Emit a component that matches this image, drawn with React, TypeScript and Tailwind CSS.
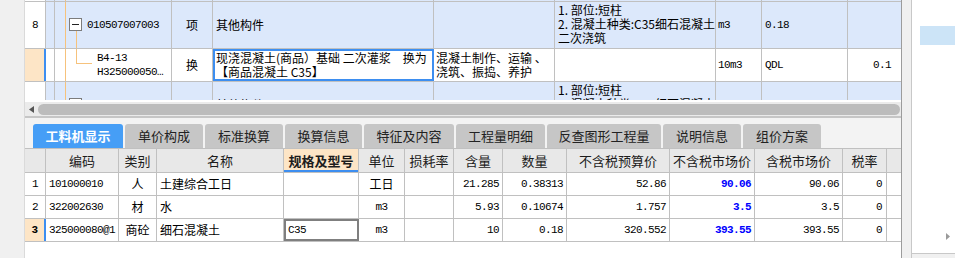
import React from 'react'

const mono = "font-['Liberation_Mono',monospace] text-[11px] tracking-[-0.6px]"

function C({
  w,
  className = '',
  nb,
  children,
}: {
  w: string
  className?: string
  nb?: boolean
  children?: React.ReactNode
}) {
  return (
    <div
      className={`${w} shrink-0 flex items-center overflow-hidden whitespace-nowrap ${
        nb ? '' : 'border-r border-[#c0c0c0]'
      } ${className}`}
    >
      {children}
    </div>
  )
}

function TreeLine() {
  return <div className="absolute left-[10px] top-0 bottom-0 w-px bg-[#f6c27c]" />
}

function FoldBox() {
  return (
    <>
      <div className="absolute left-[21px] top-[28px] bottom-0 w-px bg-[#f6c27c]" />
      <div className="absolute left-[14px] top-[16px] w-[13px] h-[13px] border border-[#7c7c7c] bg-white flex items-center justify-center">
        <div className="w-[7px] h-px bg-[#222]" />
      </div>
    </>
  )
}

function ItemRow({ num, code }: { num: string; code: string }) {
  return (
    <div className="flex h-[47px] border-b border-[#c0c0c0] bg-[#dce8fb]">
      <C w="w-[21px]" className={`bg-white justify-center ${mono}`}>{num}</C>
      <C w="w-[9px]" />
      <C w="w-[117px]" className={`relative pl-[32px] ${mono}`}>
        <TreeLine />
        <FoldBox />
        <span>{code}</span>
      </C>
      <C w="w-[41px]" className="justify-center">项</C>
      <C w="w-[221px]" className="pl-[3px]">其他构件</C>
      <C w="w-[121px]" />
      <C w="w-[161px]" className="pl-[3px] items-start pt-px">
        <div className="leading-[14px]">
          <div>1. 部位:短柱</div>
          <div>2. 混凝土种类:C35细石混凝土</div>
          <div>二次浇筑</div>
        </div>
      </C>
      <C w="w-[46px]" className={`pl-[2px] ${mono}`}>m3</C>
      <C w="w-[86px]" className={`pl-[3px] ${mono}`}>0.18</C>
      <C w="w-[53px]" nb />
    </div>
  )
}

function TopGrid() {
  return (
    <div className="h-[100px] overflow-hidden bg-white">
      <div className="flex h-[2px] border-b border-[#c0c0c0] bg-[#dce8fb]">
        <C w="w-[21px]" className="bg-white" />
        <C w="w-[9px]" />
        <C w="w-[117px]" className="relative">
          <TreeLine />
        </C>
        <C w="w-[41px]" />
        <C w="w-[221px]" />
        <C w="w-[121px]" />
        <C w="w-[161px]" />
        <C w="w-[46px]" />
        <C w="w-[86px]" />
        <C w="w-[53px]" nb />
      </div>
      <ItemRow num="8" code="010507007003" />
      <div className="flex h-[33px] border-b border-[#c0c0c0] bg-white">
        <C w="w-[21px]" nb className="bg-[#fde5c6] border-r-2 border-[#3d8ef0]" />
        <C w="w-[9px]" />
        <C w="w-[117px]" className={`relative pl-[42px] ${mono}`}>
          <TreeLine />
          <div className="absolute left-[21px] top-0 h-[14px] w-px bg-[#f6c27c]" />
          <div className="absolute left-[21px] top-[14px] w-[16px] h-px bg-[#f6c27c]" />
          <div className="leading-[14px]">
            <div>B4-13</div>
            <div>H325000050…</div>
          </div>
        </C>
        <C w="w-[41px]" className="justify-center">换</C>
        <C w="w-[221px]" nb className="border-2 border-[#3d8ef0] pl-px">
          <div className="leading-[14px]">
            <div>现浇混凝土(商品）基础 二次灌浆　换为</div>
            <div>【商品混凝土 C35】</div>
          </div>
        </C>
        <C w="w-[121px]" className="pl-[2px]">
          <div className="leading-[14px]">
            <div>混凝土制作、运输 、</div>
            <div>浇筑、振捣、养护</div>
          </div>
        </C>
        <C w="w-[161px]" />
        <C w="w-[46px]" className={`pl-[2px] ${mono}`}>10m3</C>
        <C w="w-[86px]" className={`pl-[3px] ${mono}`}>QDL</C>
        <C w="w-[53px]" nb className={`justify-end pr-[10px] ${mono}`}>0.1</C>
      </div>
      <ItemRow num="9" code="010507007004" />
    </div>
  )
}

function HScroll() {
  return (
    <div className="h-[14px] bg-[#ebebeb] flex items-center">
      <div className="w-[13px] shrink-0 flex items-center justify-center">
        <svg width="5" height="7" viewBox="0 0 5 7">
          <polygon points="5,0 0,3.5 5,7" fill="#555" />
        </svg>
      </div>
      <div className="flex-1 h-[11px] rounded-full bg-[#bcbcbc] mr-px" />
    </div>
  )
}

const tabs = [
  { label: '单价构成', w: 'w-[78px]' },
  { label: '标准换算', w: 'w-[78px]' },
  { label: '换算信息', w: 'w-[77px]' },
  { label: '特征及内容', w: 'w-[90px]' },
  { label: '工程量明细', w: 'w-[89px]' },
  { label: '反查图形工程量', w: 'w-[114px]' },
  { label: '说明信息', w: 'w-[78px]' },
  { label: '组价方案', w: 'w-[78px]' },
]

function Tabs() {
  return (
    <div className="h-[30px] bg-[#f3f3f3] flex items-end pl-[8px] gap-[2px] text-[13px]">
      <div className="w-[90px] h-[24px] rounded-t-[3px] bg-[#469ef6] text-white font-bold flex items-center justify-center">
        工料机显示
      </div>
      {tabs.map((t) => (
        <div
          key={t.label}
          className={`${t.w} h-[24px] rounded-t-[3px] bg-[#c6c6c6] text-[#222] flex items-center justify-center`}
        >
          {t.label}
        </div>
      ))}
    </div>
  )
}

interface ResRow {
  n: string
  code: string
  type: string
  name: string
  spec: string
  unit: string
  qty: string
  amt: string
  budget: string
  market: string
  taxm: string
  sel?: boolean
}

const rows: ResRow[] = [
  { n: '1', code: '101000010', type: '人', name: '土建综合工日', spec: '', unit: '工日', qty: '21.285', amt: '0.38313', budget: '52.86', market: '90.06', taxm: '90.06' },
  { n: '2', code: '322002630', type: '材', name: '水', spec: '', unit: 'm3', qty: '5.93', amt: '0.10674', budget: '1.757', market: '3.5', taxm: '3.5' },
  { n: '3', code: '325000080@1', type: '商砼', name: '细石混凝土', spec: 'C35', unit: 'm3', qty: '10', amt: '0.18', budget: '320.552', market: '393.55', taxm: '393.55', sel: true },
]

function BottomGrid() {
  return (
    <div className="bg-white">
      <div className="flex h-[25px] border-y border-[#c0c0c0] bg-[#e8e8e8] text-[13px] text-[#1c1c1c]">
        <C w="w-[21px]" />
        <C w="w-[73px]" className="justify-center">编码</C>
        <C w="w-[38px]" className="justify-center">类别</C>
        <C w="w-[127px]" className="justify-center">名称</C>
        <C w="w-[75px]" className="justify-center font-bold bg-[#fde5c6] shadow-[inset_0_-2px_0_#3d8ef0]">规格及型号</C>
        <C w="w-[46px]" className="justify-center">单位</C>
        <C w="w-[49px]" className="justify-center">损耗率</C>
        <C w="w-[49px]" className="justify-center">含量</C>
        <C w="w-[64px]" className="justify-center">数量</C>
        <C w="w-[103px]" className="justify-center">不含税预算价</C>
        <C w="w-[85px]" className="justify-center">不含税市场价</C>
        <C w="w-[88px]" className="justify-center">含税市场价</C>
        <C w="w-[44px]" className="justify-center">税率</C>
        <C w="w-[14px]" nb />
      </div>
      {rows.map((r) => (
        <div key={r.n} className="flex h-[23px] border-b border-[#c0c0c0]">
          {r.sel ? (
            <C w="w-[21px]" nb className={`justify-center bg-[#fde5c6] border-r-2 border-[#3d8ef0] font-bold ${mono}`}>
              {r.n}
            </C>
          ) : (
            <C w="w-[21px]" className={`justify-center ${mono}`}>{r.n}</C>
          )}
          <C w="w-[73px]" className={`pl-[3px] ${mono}`}>{r.code}</C>
          <C w="w-[38px]" className="justify-center">{r.type}</C>
          <C w="w-[127px]" className="pl-[3px]">{r.name}</C>
          {r.sel ? (
            <C w="w-[75px]" nb className={`border-2 border-[#7f7f7f] pl-[2px] ${mono}`}>{r.spec}</C>
          ) : (
            <C w="w-[75px]" />
          )}
          <C w="w-[46px]" className={`justify-center ${r.unit === 'm3' ? mono : ''}`}>{r.unit}</C>
          <C w="w-[49px]" />
          <C w="w-[49px]" className={`justify-end pr-[3px] ${mono}`}>{r.qty}</C>
          <C w="w-[64px]" className={`justify-end pr-[3px] ${mono}`}>{r.amt}</C>
          <C w="w-[103px]" className={`justify-end pr-[3px] ${mono}`}>{r.budget}</C>
          <C w="w-[85px]" className={`justify-end pr-[3px] font-bold text-[#0000ff] ${mono}`}>{r.market}</C>
          <C w="w-[88px]" className={`justify-end pr-[3px] ${mono}`}>{r.taxm}</C>
          <C w="w-[44px]" className={`justify-end pr-[4px] ${mono}`}>0</C>
          <C w="w-[14px]" nb />
        </div>
      ))}
    </div>
  )
}

function RightPanel() {
  return (
    <div className="w-[43px] shrink-0 flex flex-col">
      <div className="h-[254px] bg-white border-b border-[#c8c8c8] flex flex-col pt-[26px]">
        <div className="h-[19px] ml-[8px] bg-[#cce4f7]" />
        <div className="flex-1" />
        <div className="pl-[34px] mb-[13px]">
          <svg width="4" height="7" viewBox="0 0 4 7">
            <polygon points="0,0 4,3.5 0,7" fill="#9a9a9a" />
          </svg>
        </div>
      </div>
      <div className="flex-1 bg-[#f0f0f0]" />
    </div>
  )
}

export default function App() {
  return (
    <div className="flex w-[955px] h-[258px] overflow-hidden bg-white font-['Noto_Sans_CJK_SC',sans-serif] text-[12px] text-black">
      <div className="w-[25px] shrink-0 bg-[#f0f0f0] border-r border-[#dadada]" />
      <div className="w-[877px] shrink-0 flex flex-col border-r border-[#9c9c9c]">
        <TopGrid />
        <div className="h-[2px] bg-white" />
        <HScroll />
        <div className="h-[2px] bg-[#c6c6c6]" />
        <Tabs />
        <BottomGrid />
        <div className="flex-1 bg-white" />
      </div>
      <div className="w-[10px] shrink-0 bg-[#f0f0f0] border-r border-[#c8c8c8]" />
      <RightPanel />
    </div>
  )
}
